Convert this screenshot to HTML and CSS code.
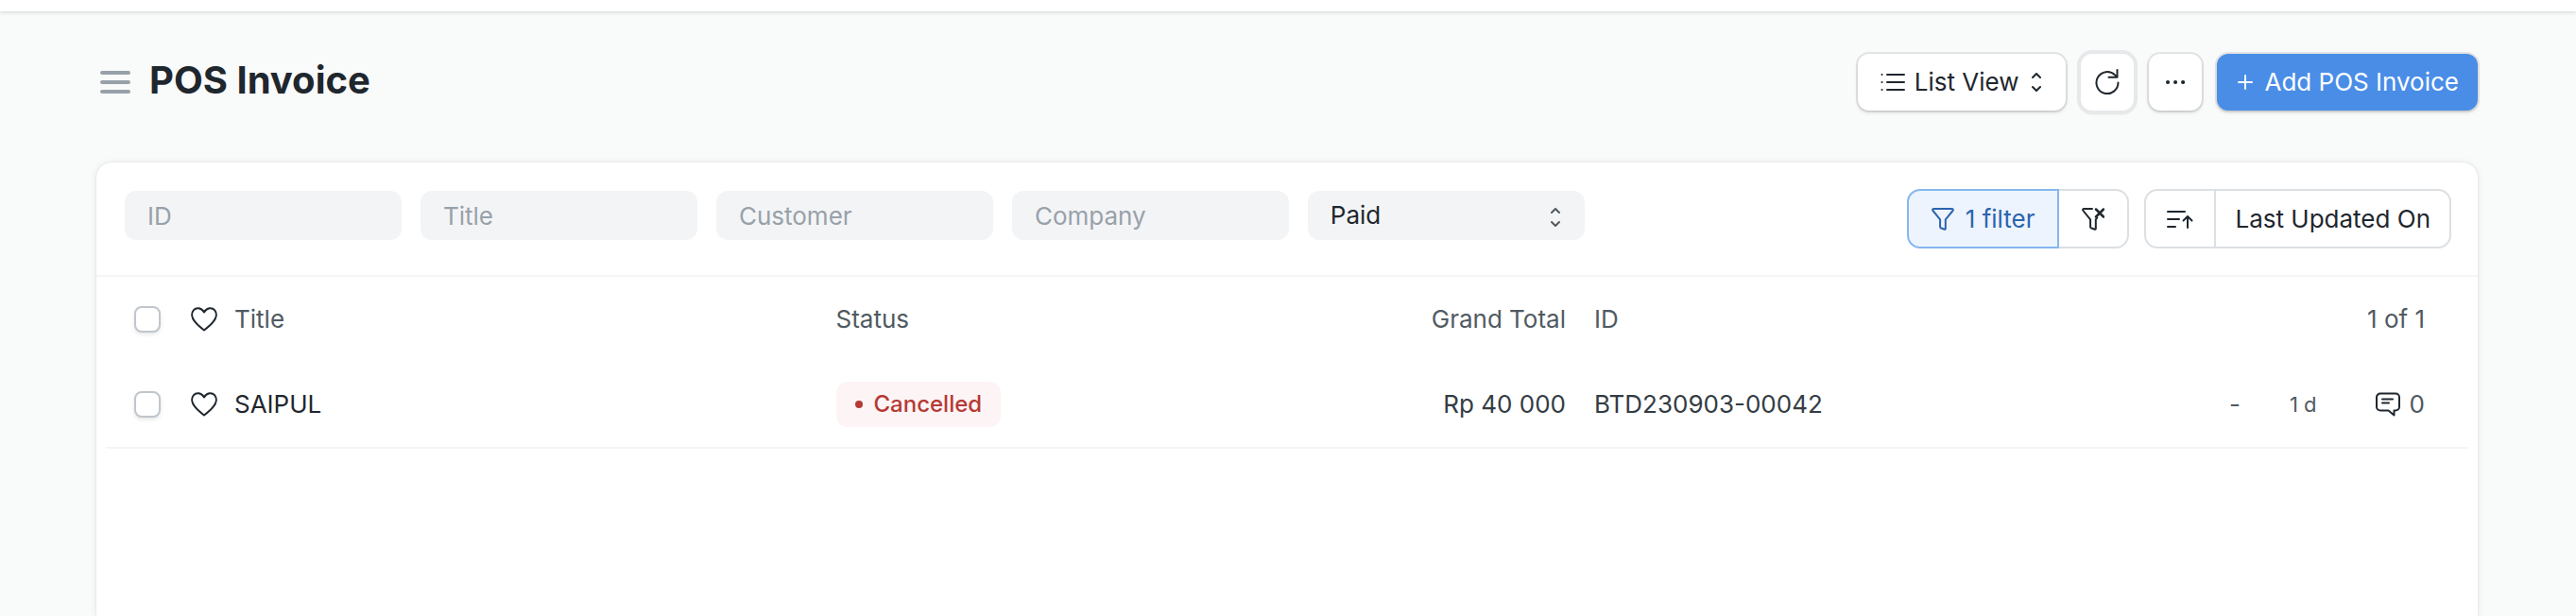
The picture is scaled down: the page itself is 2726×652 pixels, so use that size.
FILE: index.html
```
<!DOCTYPE html>
<html lang="en">
<head>
    <meta charset="UTF-8">
    <meta name="viewport" content="width=device-width, initial-scale=1.0">
    <title>POS Invoice</title>
    <link rel="stylesheet" href="styles.css">
</head>
<body>
    <div class="navbar"></div>

    <header class="page-head">
        <button type="button" class="sidebar-toggle" aria-label="Toggle sidebar">
            <svg width="32" height="24" viewBox="0 0 32 24"><path d="M2 2h28M2 12h28M2 22h28" stroke-width="4"/></svg>
        </button>
        <h1>POS Invoice</h1>
        <div class="page-actions">
            <button type="button" class="btn view-btn">
                <svg width="26" height="20" viewBox="0 0 26 20"><path d="M7 2h18M7 10h18M7 18h18M1.5 2h.1M1.5 10h.1M1.5 18h.1" stroke-width="2"/></svg>
                <span>List View</span>
                <svg class="updown" width="10" height="20" viewBox="0 0 10 20"><path d="M1 5l4-4 4 4M1 15l4 4 4-4" stroke-width="2"/></svg>
            </button>
            <button type="button" class="btn icon-btn focused" aria-label="Refresh">
                <svg width="28" height="28" viewBox="0 0 28 28"><path d="M25.5 14.5a11.5 11.5 0 1 1-3.4-8.1l2.4 2.4M15.5 8.8h9V1" stroke-width="2"/></svg>
            </button>
            <button type="button" class="btn icon-btn" aria-label="Menu">
                <svg width="20" height="4" viewBox="0 0 20 4"><path d="M2 2h.1M10 2h.1M18 2h.1" stroke-width="4"/></svg>
            </button>
            <button type="button" class="btn btn-primary">
                <svg width="16" height="16" viewBox="0 0 16 16"><path d="M8 1v14M1 8h14" stroke-width="2"/></svg>
                <span>Add POS Invoice</span>
            </button>
        </div>
    </header>

    <main class="list-card">
        <div class="filter-section">
            <form class="standard-filters">
                <input type="text" name="id" placeholder="ID" aria-label="ID">
                <input type="text" name="title" placeholder="Title" aria-label="Title">
                <input type="text" name="customer" placeholder="Customer" aria-label="Customer">
                <input type="text" name="company" placeholder="Company" aria-label="Company">
                <div class="select-wrap">
                    <select name="status" aria-label="Status">
                        <option>Draft</option>
                        <option selected>Paid</option>
                        <option>Cancelled</option>
                    </select>
                    <svg class="select-icon" width="10" height="20" viewBox="0 0 10 20"><path d="M1 5l4-4 4 4M1 15l4 4 4-4" stroke-width="2"/></svg>
                </div>
            </form>
            <div class="btn-group">
                <button type="button" class="filter-btn active">
                    <svg width="24" height="24" viewBox="0 0 24 24"><path d="M2.5 1h19c1.3 0 1.7 1 1 2l-7.700 9.300v9.700c0 .7-.5 1-1.100.8l-4-1.600c-.4-.2-.6-.5-.6-.9v-8L1.500 3C.7 2 1.200 1 2.500 1z" stroke-width="2"/></svg>
                    <span>1 filter</span>
                </button>
                <button type="button" class="filter-btn" aria-label="Clear filters">
                    <svg width="24" height="24" viewBox="0 0 24 24"><path d="M11 1H2.500C1 1 .7 2 1.500 3l7.600 9.300v8c0 .4.200.7.600.9l4 1.600c.6.2 1.100-.1 1.100-.8v-9.700l1.400-1.600" stroke-width="2"/><path d="M15 1.500l8 8M23 1.500l-8 8" stroke-width="2.500"/></svg>
                </button>
            </div>
            <div class="btn-group sort-group">
                <button type="button" class="filter-btn" aria-label="Sort direction">
                    <svg width="28" height="20" viewBox="0 0 28 20"><path d="M1 2h18M1 10h12M1 18h8M22 19V7M17.500 11.500L22 7l4.500 4.500" stroke-width="2"/></svg>
                </button>
                <button type="button" class="filter-btn sort-name">Last Updated On</button>
            </div>
        </div>

        <table class="list">
            <thead>
                <tr>
                    <th class="col-subject">
                        <div class="subject">
                            <input type="checkbox" aria-label="Select all">
                            <svg width="28" height="26" viewBox="0 0 28 26"><path d="M14 5.500C11 .2 5.500.3 3 3.200c-3 3.500-2 8.300 1 12C6.500 18.500 10 21.500 14 24.500c4-3 7.500-6 10-9.300 3-3.700 4-8.500 1-12C22.500.3 17 .2 14 5.500z" stroke-width="2"/></svg>
                            <span>Title</span>
                        </div>
                    </th>
                    <th class="col-field">Status</th>
                    <th class="col-field number">Grand Total</th>
                    <th class="col-field">ID</th>
                    <th class="col-activity">1 of 1</th>
                </tr>
            </thead>
            <tbody>
                <tr>
                    <td>
                        <div class="subject">
                            <input type="checkbox" aria-label="Select SAIPUL">
                            <svg width="28" height="26" viewBox="0 0 28 26"><path d="M14 5.500C11 .2 5.500.3 3 3.200c-3 3.500-2 8.300 1 12C6.500 18.500 10 21.500 14 24.500c4-3 7.500-6 10-9.300 3-3.700 4-8.500 1-12C22.500.3 17 .2 14 5.500z" stroke-width="2"/></svg>
                            <a href="#">SAIPUL</a>
                        </div>
                    </td>
                    <td><span class="indicator-pill">Cancelled</span></td>
                    <td class="number">Rp 40 000</td>
                    <td>BTD230903-00042</td>
                    <td>
                        <div class="activity">
                            <span>-</span>
                            <span class="modified">1 d</span>
                            <span class="comments">
                                <svg width="26" height="26" viewBox="0 0 26 26"><path d="M5 1.500h16a4 4 0 0 1 4 4v10a4 4 0 0 1-4 4h-1.500V24.500L13.500 19.500H5a4 4 0 0 1-4-4v-10a4 4 0 0 1 4-4zM7 7.500h11M7 11.500h7" stroke-width="2"/></svg>
                                0
                            </span>
                        </div>
                    </td>
                </tr>
            </tbody>
        </table>
    </main>
</body>
</html>
```
FILE: styles.css
```
* {
    box-sizing: border-box;
}

body {
    display: flex;
    flex-direction: column;
    min-height: 100vh;
    margin: 0;
    background-color: #f9fafa;
    color: #1f272e;
    font-family: Inter, sans-serif;
    font-size: 26px;
    line-height: 32px;
}

button, input, select {
    font: inherit;
    color: inherit;
}

button {
    cursor: pointer;
}

svg {
    flex: none;
    fill: none;
    stroke: currentColor;
    stroke-linecap: round;
    stroke-linejoin: round;
}

.navbar {
    height: 12px;
    background-color: #fff;
    box-shadow: 0 1px 4px rgba(0, 0, 0, 0.16);
}

/* page header */

.page-head {
    display: flex;
    align-items: center;
    padding: 45px 104px 55px;
}

.sidebar-toggle {
    display: flex;
    margin-right: 18px;
    padding: 0 2px;
    border: none;
    background: none;
    color: #98a1a9;
}

.page-head h1 {
    margin: 0;
    padding-bottom: 4px;
    font-size: 40px;
    font-weight: 700;
    line-height: 48px;
}

.page-actions {
    display: flex;
    gap: 16px;
    margin-left: auto;
}

.btn {
    display: flex;
    align-items: center;
    height: 60px;
    padding: 0 24px;
    border: none;
    border-radius: 12px;
    background-color: #fff;
    box-shadow: 0 0 0 2px rgba(0, 0, 0, 0.08), 0 2px 4px rgba(0, 0, 0, 0.14);
}

.view-btn {
    gap: 10px;
}

.updown {
    margin: 0 2px 0 4px;
}

.icon-btn {
    justify-content: center;
    width: 56px;
    padding: 0;
}

.focused {
    box-shadow: 0 0 0 4px #e6e8ea, 0 2px 4px rgba(0, 0, 0, 0.2);
}

.btn-primary {
    gap: 12px;
    padding: 0 20px 0 22px;
    background-color: #498de7;
    color: #fff;
}

/* list */

.list-card {
    flex: 1;
    margin: 0 104px 0 102px;
    border-radius: 16px 16px 0 0;
    background-color: #fff;
    box-shadow: 0 0 2px rgba(0, 0, 0, 0.12), 0 1px 10px rgba(0, 0, 0, 0.08);
}

.filter-section {
    display: flex;
    gap: 16px;
    padding: 28px 28px 28px 30px;
    border-bottom: 2px solid #f4f5f6;
}

.standard-filters {
    display: grid;
    flex: 1;
    grid-template-columns: repeat(6, 1fr);
    gap: 20px;
    margin-right: 12px;
    padding-top: 2px;
}

.standard-filters input, .standard-filters select {
    width: 100%;
    min-width: 0;
    height: 52px;
    padding: 0 24px;
    border: none;
    border-radius: 12px;
    background-color: #f3f4f6;
}

.standard-filters input::placeholder {
    color: #98a1a9;
}

.select-wrap {
    position: relative;
}

.standard-filters select {
    appearance: none;
}

.select-icon {
    position: absolute;
    top: 18px;
    right: 26px;
    color: #505a62;
    pointer-events: none;
}

.btn-group {
    display: flex;
}

.filter-btn {
    display: flex;
    align-items: center;
    gap: 12px;
    height: 63px;
    padding: 0 24px;
    border: 2px solid #dce0e3;
    background-color: #fff;
}

.filter-btn:first-child {
    border-radius: 14px 0 0 14px;
}

.filter-btn:last-child {
    border-left: none;
    border-radius: 0 14px 14px 0;
}

.filter-btn.active {
    border-color: #85b7ef;
    background-color: #edf4fd;
    color: #2c64ae;
}

.sort-group .filter-btn {
    padding: 0 22px;
}

.sort-group .sort-name {
    padding: 0 20px;
}

.list {
    width: calc(100% - 20px);
    margin: 0 10px;
    border-collapse: separate;
    border-spacing: 0;
    table-layout: fixed;
}

.list th, .list td {
    height: 90px;
    padding: 0 30px 0 0;
    text-align: left;
    font-weight: 400;
    white-space: nowrap;
}

.list th {
    color: #505a62;
}

.list td {
    height: 92px;
    border-bottom: 2px solid #f4f5f6;
    color: #333c44;
}

.list .col-subject {
    width: 30.9%;
}

.list .col-field {
    width: 16.05%;
}

.list .number {
    text-align: right;
}

.list .col-activity {
    padding-right: 46px;
    text-align: right;
}

.list td:last-child {
    padding-right: 46px;
}

.subject {
    display: flex;
    align-items: center;
    padding-left: 30px;
}

.subject svg {
    margin: 0 18px 0 32px;
    color: #1f272e;
}

.subject a {
    color: #1f272e;
    text-decoration: none;
}

.subject input {
    width: 28px;
    height: 28px;
    margin: 0;
    border: 2px solid #c0c6cc;
    border-radius: 8px;
    background-color: #fff;
    box-shadow: 0 2px 4px rgba(0, 0, 0, 0.1);
    appearance: none;
}

.subject input:checked {
    background-color: #498de7;
}

.indicator-pill {
    display: inline-flex;
    align-items: center;
    gap: 12px;
    height: 48px;
    padding: 0 20px;
    border-radius: 12px;
    background-color: #fdf4f5;
    color: #b53a35;
    font-size: 24px;
    font-weight: 500;
}

.indicator-pill::before {
    content: "";
    width: 8px;
    height: 8px;
    border-radius: 50%;
    background-color: #b53a35;
}

.activity {
    display: flex;
    align-items: center;
    justify-content: flex-end;
    color: #505a62;
}

.modified {
    margin: 0 62px 0 52px;
    font-size: 22px;
}

.comments {
    display: flex;
    align-items: center;
    gap: 10px;
}

.comments svg {
    color: #1f272e;
}
```
